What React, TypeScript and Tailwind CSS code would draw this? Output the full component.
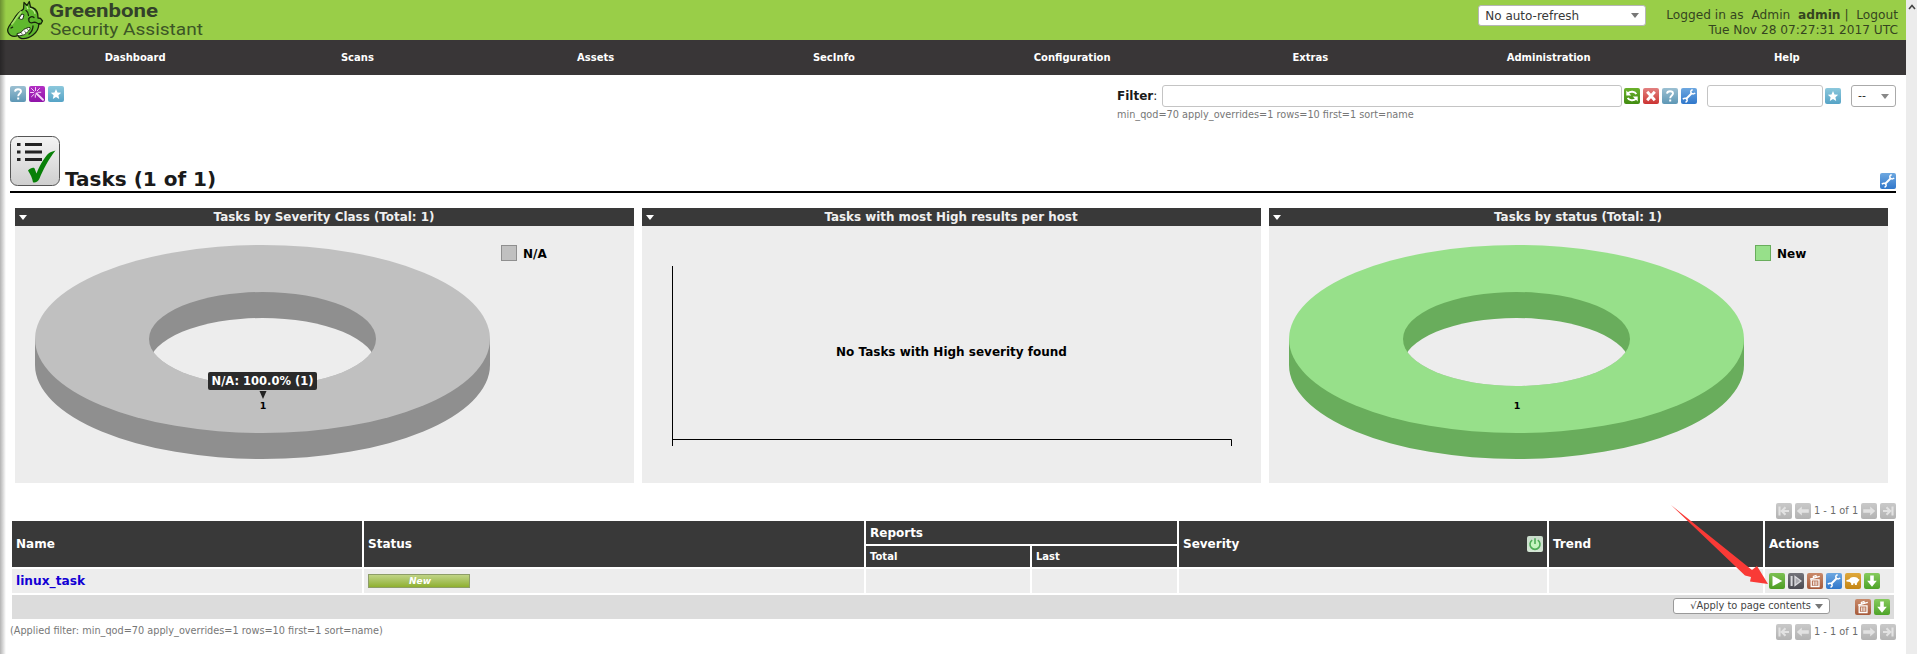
import React from "react";

type IconName =
  | "help" | "wizard" | "star" | "refresh" | "delete" | "wrench" | "start" | "resume"
  | "trash" | "clone" | "download" | "power" | "first" | "prev" | "next" | "last";

const iconBackground: Record<IconName, string> = {
  help: "bg-linear-to-b from-[#9cc0d2] to-[#5d97b5]",
  wizard: "bg-linear-to-b from-[#b32fc4] to-[#8f12a8]",
  star: "bg-linear-to-b from-[#8cc8dc] to-[#55a3c6]",
  refresh: "bg-linear-to-b from-[#6bb12b] to-[#418c10]",
  delete: "bg-linear-to-b from-[#e28080] to-[#cb3131]",
  wrench: "bg-linear-to-b from-[#6ea8e0] to-[#2f77cb]",
  start: "bg-linear-to-b from-[#7cc052] to-[#4d9e22]",
  resume: "bg-linear-to-b from-[#74747a] to-[#4b4b52]",
  trash: "bg-linear-to-b from-[#c98a6a] to-[#a65a3a]",
  clone: "bg-linear-to-b from-[#dfa83a] to-[#c48512]",
  download: "bg-linear-to-b from-[#86cb5c] to-[#4da327]",
  power: "bg-linear-to-b from-[#c9dccb] to-[#d4e6d4]",
  first: "bg-linear-to-b from-[#c9c9c9] to-[#b3b3b3]",
  prev: "bg-linear-to-b from-[#c9c9c9] to-[#b3b3b3]",
  next: "bg-linear-to-b from-[#c9c9c9] to-[#b3b3b3]",
  last: "bg-linear-to-b from-[#c9c9c9] to-[#b3b3b3]",
};

const iconDrawing: Record<IconName, React.ReactNode> = {
  help: (
    <g fill="none" stroke="#fff" strokeWidth="1.9">
      <path d="M5 5.6C5.2 3.9 6.4 3.2 8 3.2c1.800 0 3 .9 3 2.300C11 7.400 8.200 7.600 8.200 10.200" />
      <path d="M8.200 11.600v2" strokeWidth="2" />
    </g>
  ),
  wizard: (
    <g stroke="#f4d5f8" strokeLinecap="round">
      <path d="M7.500 7.500l6.500 6.300" strokeWidth="1.900" />
      <path d="M6.500 1.500v3M1.500 6.500h3M2.500 2.500l2.600 2.600M10.500 2.500L8.300 4.700M2.600 10.600l2.300-2.200M8.800 6.300h3M6.300 8.800v2.500" strokeWidth="1" />
    </g>
  ),
  star: <path fill="#fff" d="M8 3l1.500 3.400 3.700.4-2.800 2.500.8 3.700L8 11.100 4.800 13l.8-3.700L2.800 6.800l3.700-.4z" />,
  refresh: (
    <g fill="none" stroke="#fff" strokeWidth="2">
      <path d="M12.300 6.200C11 3.400 6.500 2.800 4 5.200M3.700 9.800c1.300 2.800 5.800 3.400 8.300 1" />
      <path d="M2.300 2.600v5h5zM13.700 13.400v-5h-5z" fill="#fff" stroke="none" />
    </g>
  ),
  delete: <path d="M4.200 3.800l7.600 8.400M11.800 3.800l-7.600 8.400" stroke="#fff" strokeWidth="2.900" />,
  wrench: (
    <g fill="none" stroke="#fff">
      <path d="M5 11l6-6" strokeWidth="2" />
      <path d="M11.700 1.700c-1.600.5-2.300 1.700-1.700 3 .6 1.300 2.500 1.700 4.200.3M1.800 11.200c1.500-1.200 3.300-1.100 4.100.1.700 1.100.1 2.400-1.400 3" strokeWidth="1.500" />
    </g>
  ),
  start: <path fill="#fff" d="M3.500 2.800L13.300 8l-9.800 5.200z" />,
  resume: (
    <g fill="#aaaab0" stroke="#dadade">
      <path d="M3.600 3v10" strokeWidth="2" />
      <path d="M7 3.600L12.900 8 7 12.400z" strokeWidth="1.300" />
    </g>
  ),
  trash: (
    <g fill="none" stroke="#fff">
      <path d="M4.200 6.800h7.800v6.700H4.200z" strokeWidth="1.300" />
      <path d="M6.400 8.300v4M8.100 8.300v4M9.800 8.300v4" strokeWidth=".9" />
      <path d="M3 6.200L12.800 3.400M6.700 4.500L6.400 3.400l2.500-.8.400 1.100" strokeWidth="1.300" />
    </g>
  ),
  clone: (
    <g fill="#fff">
      <ellipse cx="8.900" cy="7.300" rx="4.500" ry="3.200" />
      <path d="M1.300 7.200l3.800-1.300v3L1.500 8.600zM12.800 5.800l1.900 1-1.400 1.700zM6 9.300h2.200v2.700H6.300zM9.900 9.300H12l-.2 2.700h-1.900z" />
    </g>
  ),
  download: <path fill="#fff" d="M6.200 2.600h3.600v5.200h3L8 13.800 3.200 7.800h3z" />,
  power: (
    <g fill="none" stroke="#4fae57" strokeWidth="1.600">
      <path d="M5.200 4.200a5 5 0 1 0 5.600 0" fill="#c4f5bf" />
      <path d="M8 2.300V8" />
    </g>
  ),
  first: <path d="M3.500 3.500v9M13 8H7M9.500 4.300L5.800 8l3.700 3.700" fill="none" stroke="#e2e2e2" strokeWidth="2.100" />,
  prev: <path fill="#e2e2e2" d="M1.800 8l5-4.600v2.800h7v3.600h-7v2.800z" />,
  next: <path fill="#e2e2e2" d="M14.200 8l-5-4.600v2.800h-7v3.600h7v2.800z" />,
  last: <path d="M12.500 3.500v9M3 8h6M6.500 4.300L10.200 8l-3.700 3.700" fill="none" stroke="#e2e2e2" strokeWidth="2.100" />,
};

function Icon({ name }: { name: IconName }) {
  return (
    <span className={`block size-4 shrink-0 overflow-hidden rounded-[2px] ${iconBackground[name]}`}>
      <svg viewBox="0 0 16 16" className="block size-4">{iconDrawing[name]}</svg>
    </span>
  );
}

function Caret({ className = "" }: { className?: string }) {
  return (
    <svg viewBox="0 0 8 5" className={`block h-[5px] w-2 shrink-0 ${className}`}>
      <path d="M0 0h8L4 5z" fill="currentColor" />
    </svg>
  );
}

function Logo() {
  return (
    <svg viewBox="0 0 210 40" className="block h-10 w-[210px]">
      <g stroke="#16240c" strokeLinejoin="round" strokeLinecap="round">
        <path
          d="M23.500 9L24 2.500l3 3L29.300 1.500l1.200 5.500c3.500.8 6.500 3.500 7.200 7l.3 4 2.500.3 2 2.700-1.500 2.800-2.200.3c0 4-2.500 8.500-5.800 11-3 2.400-7.500 3.800-11.500 3.400-1.800-.3-3-1.500-3.500-3-2 .8-5.500 1-7.500-.3-2-1.500-3.200-3.700-2.700-6 .8-3.200 2.700-5 4.700-7.700 1.500-2.500 3-5.500 5.500-8 1.500-1.600 3.500-3 5.500-4.500z"
          fill="#5fb82e"
          strokeWidth="1.300"
        />
        <path d="M12 24c3-3.500 5-8 9-12" stroke="#a5e06a" strokeWidth="1.800" fill="none" />
        <path d="M26 10.500c1.500 1 2.500 3 2.500 5M28.500 19c1-2.300 3.800-3 5.500-1.500M29 19c-.8 2 .5 3.800 2.300 3.800 2.200.2 3-1.200 4.700-.3 1.700 1 3 2 4 .8M33 26c0 3-1.500 6-4 8" fill="none" strokeWidth="1.300" />
        <path d="M27 6.500l.8 2.200M30.300 8.500c2.400.8 4.200 2.700 4.700 5" stroke="#c2ef90" strokeWidth="1.200" fill="none" />
        <path d="M19 18.200l2.800-4.200 2.200.8-1.200 4.200c-1.200.8-2.800.4-3.800-.8z" fill="#fff" strokeWidth=".9" />
        <path d="M17.500 33.500c3-.2 4.500-1.700 6.300-4.200 1.800-.5 4.500-2.300 6.200-1.800.8 2-2 3.500-3.700 5.700-2.300 2.300-5.700 3-8.800 2.300z" fill="#fff" strokeWidth=".9" />
        <path d="M21.500 33l.8 1.600M24.600 31l1 1.700M27.300 29l.8 1.300" strokeWidth=".6" fill="none" />
        <path d="M11 28l1.600-.8" strokeWidth="1.300" />
      </g>
      <text x="49" y="16.800" textLength="109" lengthAdjust="spacingAndGlyphs" className="fill-[#33412a] font-['Roboto',sans-serif] text-[18px] font-bold">Greenbone</text>
      <text x="50" y="35" textLength="153" lengthAdjust="spacingAndGlyphs" className="fill-[#3c5626] font-['Roboto',sans-serif] text-[16px]">Security Assistant</text>
    </svg>
  );
}

function Panel({ title, children }: { title: string; children: React.ReactNode }) {
  return (
    <section className="flex w-[619px] flex-col bg-[#ededed]">
      <header className="flex h-[18px] items-center bg-[#393939] pl-1 text-[11.900px] font-bold text-[#f0f0f0]">
        <Caret className="text-white" />
        <h2 className="flex-1 pr-[13px] text-center leading-[18px]">{title}</h2>
      </header>
      <div className="relative h-[257px]">{children}</div>
    </section>
  );
}

function Donut({ id, top, side, label }: { id: string; top: string; side: string; label: string }) {
  return (
    <svg viewBox="0 0 619 257" className="block h-[257px] w-[619px] font-['DejaVu_Sans',sans-serif] font-bold">
      <defs>
        <clipPath id={id}>
          <ellipse cx="247.500" cy="113" rx="113.500" ry="47" />
        </clipPath>
      </defs>
      <path fill={side} d="M20 113v26a227.500 94 0 0 0 455 0v-26z" />
      <ellipse cx="247.500" cy="113" rx="227.500" ry="94" fill={top} />
      <ellipse cx="247.500" cy="113" rx="113.500" ry="47" fill={side} />
      <ellipse cx="247.500" cy="139" rx="113.500" ry="47" fill="#ededed" clipPath={`url(#${id})`} />
      <rect x="486.500" y="19.500" width="15" height="15" fill={top} stroke={side} />
      <text x="508" y="32" fontSize="12">{label}</text>
      <text x="248" y="183" fontSize="9.500" textAnchor="middle">1</text>
    </svg>
  );
}

function Pager() {
  return (
    <div className="flex h-4 items-center gap-[3px] pr-2 text-[#6c6c6c]">
      <Icon name="first" />
      <Icon name="prev" />
      <span className="w-[44px] text-center text-[9.800px] leading-4 whitespace-nowrap">1 - 1 of 1</span>
      <Icon name="next" />
      <Icon name="last" />
    </div>
  );
}

const menu = ["Dashboard", "Scans", "Assets", "SecInfo", "Configuration", "Extras", "Administration", "Help"];
const head = "flex items-center bg-[#393939] px-1 text-white";
const cell = "flex items-center bg-[#ededed] px-1";

export default function App() {
  return (
    <div className="relative flex h-[654px] w-[1917px] overflow-hidden bg-white font-['DejaVu_Sans',sans-serif] text-[12px] text-[#1a1a1a]">
      <div className="flex w-[1906px] flex-col">
        <header className="flex h-10 items-start justify-between bg-[#99ce48] pr-2 pl-0">
          <Logo />
          <div className="flex text-[#393939]">
            <div className="mt-[5px] mr-5 flex h-[21px] w-[168px] items-center justify-between rounded-[3px] border border-[#b6b6b6] bg-white px-[6px]">
              <span>No auto-refresh</span>
              <Caret className="text-[#777]" />
            </div>
            <div className="mt-2 text-right text-[12.200px] leading-[15px] whitespace-pre text-[#35451f]">
              <div>Logged in as  Admin  <b>admin</b> |  Logout</div>
              <div>Tue Nov 28 07:27:31 2017 UTC</div>
            </div>
          </div>
        </header>

        <nav className="flex h-[35px] items-center bg-[#393637] text-[10px] font-bold text-white">
          {menu.map((item, i) => (
            <span key={item} className={`flex-1 basis-0 text-center ${i === 0 ? "translate-x-4" : ""}`}>{item}</span>
          ))}
        </nav>

        <div className="flex h-[61px] justify-between px-[10px] pt-[10px]">
          <div className="flex gap-[3px] pt-px">
            <Icon name="help" />
            <Icon name="wizard" />
            <Icon name="star" />
          </div>
          <div className="flex w-[779px] flex-col">
            <div className="flex h-[22px] items-center">
              <span className="w-[45px] whitespace-nowrap"><b>Filter</b>:</span>
              <div className="h-[22px] w-[460px] rounded-[3px] border border-[#c4c4c4] bg-white" />
              <div className="ml-[2px] flex gap-[3px]">
                <Icon name="refresh" />
                <Icon name="delete" />
                <Icon name="help" />
                <Icon name="wrench" />
              </div>
              <div className="ml-[10px] h-[22px] w-[116px] rounded-[3px] border border-[#c4c4c4] bg-white" />
              <div className="ml-[2px]"><Icon name="star" /></div>
              <div className="ml-[10px] flex h-[22px] w-[45px] items-center justify-between rounded-[3px] border border-[#aaa] bg-white px-[6px]">
                <span className="text-[11px]">--</span>
                <Caret className="text-[#888]" />
              </div>
            </div>
            <span className="mt-px text-[9.730px] leading-[13px] text-[#777]">min_qod=70 apply_overrides=1 rows=10 first=1 sort=name</span>
          </div>
        </div>

        <div className="mx-[10px] flex h-[57px] items-start justify-between border-b-2 border-black">
          <div className="flex items-end gap-[5px]">
            <svg viewBox="0 0 50 50" className="block size-[50px]">
              <defs>
                <linearGradient id="tile" x1="0" y1="0" x2="0" y2="1">
                  <stop offset="0" stopColor="#f4f4f4" />
                  <stop offset="1" stopColor="#cfcfcf" />
                </linearGradient>
              </defs>
              <rect x=".5" y=".5" width="49" height="49" rx="7" fill="url(#tile)" stroke="#555" />
              <path d="M7 8.500h3.500M7 16h3.500M7 23.500h3.500M15 8.500h17M15 16h17M15 23.500h17" stroke="#222" strokeWidth="3.200" />
              <path d="M18 34.500c2.500-2.600 5-3.300 6.500-2.300l2 5.200C30.500 28 36 18 41 16l4.500-1.500C38 24 33 34 29.500 42.500c-1.300 3.500-4.500 4.500-6.500 3.800-.7-4-2.500-8-5-11.800z" fill="#088008" />
            </svg>
            <h1 className="text-[20px] leading-[14px] font-bold">Tasks (1 of 1)</h1>
          </div>
          <div className="mt-[37px]"><Icon name="wrench" /></div>
        </div>

        <div className="flex gap-2 pt-[15px] pl-[15px]">
          <Panel title="Tasks by Severity Class (Total: 1)">
            <Donut id="severity-hole" top="#c0c0c0" side="#8f8f8f" label="N/A" />
            <div className="absolute top-[146px] left-[193px] flex w-[109px] flex-col items-center">
              <span className="h-[18px] w-full rounded-[2px] bg-[#2b2b2b] text-center text-[11.500px] leading-[19px] font-bold whitespace-nowrap text-white">N/A: 100.0% (1)</span>
              <svg viewBox="0 0 8 8" className="mt-px block size-2"><path d="M.5 0h7L4 8z" fill="#222" /></svg>
            </div>
          </Panel>
          <Panel title="Tasks with most High results per host">
            <svg viewBox="0 0 619 257" className="block h-[257px] w-[619px] font-['DejaVu_Sans',sans-serif]">
              <path d="M30.500 40v180M30 213.500h559.500v6.500" fill="none" stroke="#000" />
              <text x="309.500" y="130" fontSize="12" fontWeight="bold" textAnchor="middle">No Tasks with High severity found</text>
            </svg>
          </Panel>
          <Panel title="Tasks by status (Total: 1)">
            <Donut id="status-hole" top="#97e08a" side="#69ad5c" label="New" />
          </Panel>
        </div>

        <div className="mt-5 flex h-[18px] justify-end pr-[2px]"><Pager /></div>

        <div className="ml-3 grid w-[1882px] grid-cols-[350px_500px_164px_145px_368px_214px_129px] grid-rows-[23px_21px_24px_24px] gap-[2px] font-bold">
          <div className={`${head} row-span-2`}>Name</div>
          <div className={`${head} row-span-2`}>Status</div>
          <div className={`${head} col-span-2`}>Reports</div>
          <div className={`${head} row-span-2 justify-between`}>Severity<Icon name="power" /></div>
          <div className={`${head} row-span-2`}>Trend</div>
          <div className={`${head} row-span-2`}>Actions</div>
          <div className={`${head} text-[10px]`}>Total</div>
          <div className={`${head} text-[10px]`}>Last</div>
          <div className={`${cell} text-[12.200px] text-[#1200d4]`}>linux_task</div>
          <div className={cell}>
            <div className="h-[14px] w-[102px] border border-[#8d9d68] bg-linear-to-b from-[#c0d485] to-[#8fb02c] pl-[2px] text-center text-[9px] leading-3 text-white italic">New</div>
          </div>
          <div className={cell} />
          <div className={cell} />
          <div className={cell} />
          <div className={cell} />
          <div className={`${cell} gap-[3px]`}>
            <Icon name="start" />
            <Icon name="resume" />
            <Icon name="trash" />
            <Icon name="wrench" />
            <Icon name="clone" />
            <Icon name="download" />
          </div>
          <div className="col-span-7 flex items-center justify-end bg-[#dcdcdc] pr-1 font-normal text-[#444]">
            <div className="mb-[2px] flex h-4 w-[157px] items-center justify-end gap-1 rounded-[3px] border border-[#999] bg-white pr-[6px] text-[9.850px] whitespace-nowrap">
              √Apply to page contents
              <Caret className="text-[#777]" />
            </div>
            <div className="ml-[25px] flex gap-[3px]">
              <Icon name="trash" />
              <Icon name="download" />
            </div>
          </div>
        </div>

        <div className="flex justify-between pt-[5px] pr-[2px] pl-[10px] text-[9.730px] leading-[14px] text-[#777]">
          <span>(Applied filter: min_qod=70 apply_overrides=1 rows=10 first=1 sort=name)</span>
          <Pager />
        </div>
      </div>

      <div className="flex w-[11px] justify-center bg-[#ececec] pt-[4px]">
        <svg viewBox="0 0 8 6" className="block h-[6px] w-2"><path d="M1 5l3-3.500L7 5" fill="none" stroke="#444" strokeWidth="1.600" /></svg>
      </div>
      <div className="pointer-events-none absolute inset-y-0 left-0 w-[6px] bg-linear-to-r from-black/30 to-transparent" />

      <svg viewBox="0 0 100 82" className="pointer-events-none absolute top-[504px] left-[1669px] block h-[82px] w-[100px]">
        <path d="M2 1L83 66l5-4 11 18-18-2.500 1-4.500-6-1.500z" fill="#f93a36" />
      </svg>
    </div>
  );
}
